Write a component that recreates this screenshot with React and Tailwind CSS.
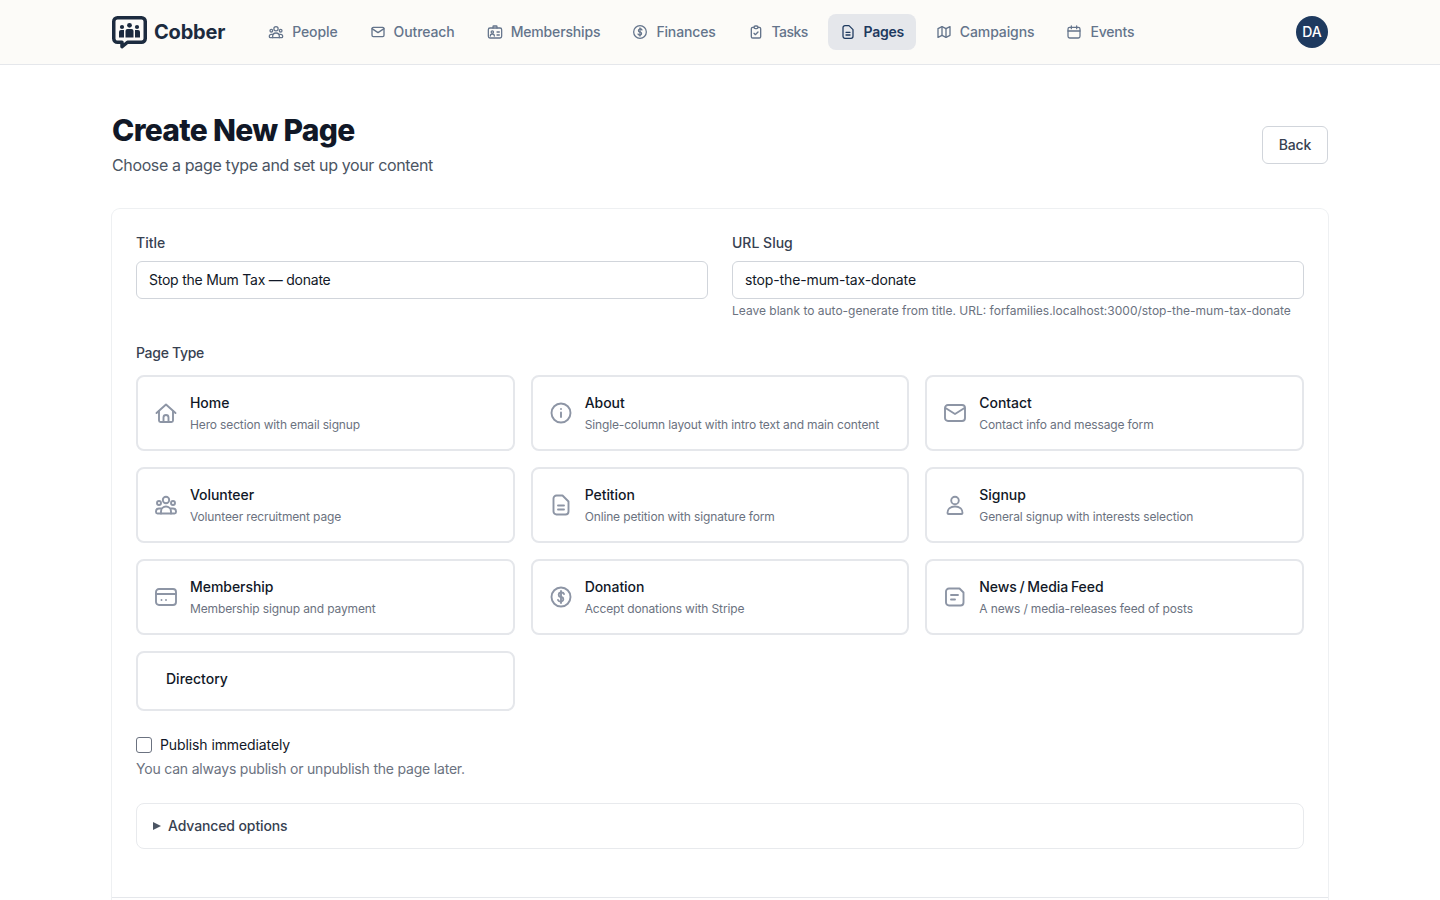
import { TbMail, TbClipboardCheck, TbMap } from 'react-icons/tb';

// icons drawn by hand where the packages don't have a close match
function Svg({ className, children }) {
  return (
    <svg viewBox="0 0 24 24" fill="none" stroke="currentColor" strokeWidth="1.9" strokeLinecap="round" strokeLinejoin="round" className={className}>
      {children}
    </svg>
  );
}

const PeopleIcon = ({ className }) => (
  <Svg className={className}>
    <circle cx="12" cy="7" r="3.2" />
    <circle cx="5" cy="10" r="2" />
    <circle cx="19" cy="10" r="2" />
    <path d="M7 20.5v-2a5 5 0 0 1 10 0v2" />
    <path d="M7 15.5H5a3 3 0 0 0-3 3v.5a1.5 1.5 0 0 0 1.500 1.500h17A1.500 1.500 0 0 0 22 19v-.5a3 3 0 0 0-3-3h-2" />
  </Svg>
);

const BadgeIcon = ({ className }) => (
  <Svg className={className}>
    <rect x="2" y="6" width="20" height="15" rx="2.500" />
    <path d="M9 6V4a1 1 0 0 1 1-1h4a1 1 0 0 1 1 1v2" />
    <circle cx="8" cy="12" r="1.800" />
    <path d="M5 18a3 3 0 0 1 6 0" />
    <path d="M15 12h3.500M15 16.500h3.500" />
  </Svg>
);

const DollarIcon = ({ className }) => (
  <Svg className={className}>
    <circle cx="12" cy="12" r="9.500" />
    <path d="M15 9a2.500 2 0 0 0-2.500-1.500h-1a2.300 2.300 0 0 0 0 4.500h1a2.300 2.300 0 0 1 0 4.500h-1A2.500 2 0 0 1 9 15" />
    <path d="M12 6v12" />
  </Svg>
);

const DocIcon = ({ className }) => (
  <Svg className={className}>
    <path d="M7.500 2.500h6l6 6v10a3 3 0 0 1-3 3h-9a3 3 0 0 1-3-3v-13a3 3 0 0 1 3-3z" />
    <path d="M9 12.500h6M9 16.500h6" />
  </Svg>
);

const CalendarIcon = ({ className }) => (
  <Svg className={className}>
    <rect x="3" y="5" width="18" height="16" rx="2.500" />
    <path d="M8 3v4M16 3v4M3 10.500h18" />
  </Svg>
);

const HomeIcon = ({ className }) => (
  <Svg className={className}>
    <path d="M2.500 12 12 3.500 21.500 12" />
    <path d="M5 10v9.500a1.500 1.500 0 0 0 1.500 1.500h11a1.500 1.500 0 0 0 1.500-1.500V10" />
    <path d="M9.500 21v-4.500a2.500 2.500 0 0 1 5 0V21" />
  </Svg>
);

const InfoIcon = ({ className }) => (
  <Svg className={className}>
    <circle cx="12" cy="12" r="9.500" />
    <path d="M12 8h.01M12 11.500V16" />
  </Svg>
);

const MailIcon = ({ className }) => (
  <Svg className={className}>
    <rect x="2" y="4" width="20" height="16" rx="3" />
    <path d="M2.500 7 12 13l9.500-6" />
  </Svg>
);

const UserIcon = ({ className }) => (
  <Svg className={className}>
    <circle cx="12" cy="7.500" r="3.800" />
    <path d="M4.500 20c0-4 3-6.500 7.500-6.500s7.500 2.500 7.500 6.500a1 1 0 0 1-1 1h-13a1 1 0 0 1-1-1z" />
  </Svg>
);

const CardIcon = ({ className }) => (
  <Svg className={className}>
    <rect x="2" y="4" width="20" height="16" rx="3" />
    <path d="M2 9h20M7.500 15h.01M12 15h.01" />
  </Svg>
);

const NewsIcon = ({ className }) => (
  <Svg className={className}>
    <path d="M6 3.500h10.500l4 4v10a3 3 0 0 1-3 3H6a3 3 0 0 1-3-3v-11a3 3 0 0 1 3-3z" />
    <path d="M8 10h7M8 14.500h4" />
  </Svg>
);

const navItems = [
  { label: 'People', icon: PeopleIcon, track: 'tracking-[-0.1px]' },
  { label: 'Outreach', icon: TbMail, track: 'tracking-[-0.1px]' },
  { label: 'Memberships', icon: BadgeIcon, track: 'tracking-[-0.15px]' },
  { label: 'Finances', icon: DollarIcon, track: 'tracking-[-0.15px]' },
  { label: 'Tasks', icon: TbClipboardCheck, track: 'tracking-[-0.6px]' },
  { label: 'Pages', icon: DocIcon, active: true, track: 'tracking-[-0.3px]' },
  { label: 'Campaigns', icon: TbMap, track: 'tracking-[-0.1px]' },
  { label: 'Events', icon: CalendarIcon, track: 'tracking-[-0.2px]' },
];

const pageTypes = [
  { title: 'Home', desc: 'Hero section with email signup', icon: HomeIcon },
  { title: 'About', desc: 'Single-column layout with intro text and main content', icon: InfoIcon },
  { title: 'Contact', desc: 'Contact info and message form', icon: MailIcon },
  { title: 'Volunteer', desc: 'Volunteer recruitment page', icon: PeopleIcon },
  { title: 'Petition', desc: 'Online petition with signature form', icon: DocIcon },
  { title: 'Signup', desc: 'General signup with interests selection', icon: UserIcon },
  { title: 'Membership', desc: 'Membership signup and payment', icon: CardIcon },
  { title: 'Donation', desc: 'Accept donations with Stripe', icon: DollarIcon },
  { title: 'News / Media Feed', desc: 'A news / media-releases feed of posts', icon: NewsIcon },
];

function Logo() {
  return (
    <svg width="35" height="33" viewBox="0 0 35 33" fill="none">
      <path d="M5.500 1.750h24a3.750 3.750 0 0 1 3.750 3.750v17a3.750 3.750 0 0 1-3.750 3.750H15.500l-5.500 4.500v-4.500H5.500a3.750 3.750 0 0 1-3.750-3.750v-17A3.750 3.750 0 0 1 5.500 1.750z" stroke="#1c2b3f" strokeWidth="3.500" strokeLinejoin="round" />
      <circle cx="17.500" cy="9.300" r="2.400" fill="#1c2b3f" />
      <circle cx="10" cy="11" r="2.100" fill="#1c2b3f" />
      <circle cx="25" cy="11" r="2.100" fill="#1c2b3f" />
      <path d="M13.500 21.500V15a2 2 0 0 1 2-2h4a2 2 0 0 1 2 2v6.500z" fill="#1c2b3f" />
      <path d="M7 21.500V16a2 2 0 0 1 2-2h3v7.500z" fill="#1c2b3f" />
      <path d="M23 21.500V14h3a2 2 0 0 1 2 2v5.500z" fill="#1c2b3f" />
    </svg>
  );
}

function PageTypeCard({ title, desc, icon: Icon }) {
  return (
    <div className="h-[76px] flex items-center gap-3 rounded-lg border-2 border-[#e5e7eb] bg-white px-4">
      <Icon className="w-6 h-6 text-[#8d95a5] shrink-0" />
      <div>
        <div className="text-sm font-medium leading-5 text-[#111827] tracking-[-0.05px] [word-spacing:-1px]">{title}</div>
        <div className="mt-[4px] text-xs leading-4 text-[#6b7280] tracking-[-0.14px]">{desc}</div>
      </div>
    </div>
  );
}

export default function App() {
  return (
    <div className="min-h-screen bg-white font-['Inter',sans-serif]">
      {/* Navbar */}
      <header className="h-[65px] bg-[#fcfbf8] border-b border-[#e5e7eb]">
        <div className="mx-auto w-[1216px] h-16 flex items-center">
          <div className="flex items-center gap-[7px] mr-[31px]">
            <Logo />
            <span className="text-xl font-bold text-[#1c2b3f] tracking-[-0.2px]">Cobber</span>
          </div>
          <nav className="flex items-center gap-2">
            {navItems.map(({ label, icon: Icon, active, track }) => (
              <div key={label} className={active ? 'flex items-center gap-2 h-9 px-3 rounded-lg bg-[#e5e7eb] text-[#1e3a5f] text-sm font-semibold' : 'flex items-center gap-2 h-9 px-3 rounded-lg text-[#64748b] text-sm font-medium'}>
                <Icon className="w-4 h-4" />
                <span className={track}>{label}</span>
              </div>
            ))}
          </nav>
          <div className="ml-auto w-8 h-8 rounded-full bg-[#1e3a5f] text-white text-sm font-medium flex items-center justify-center">DA</div>
        </div>
      </header>

      <main className="mx-auto w-[1216px]">
        <div className="pt-[45px] flex items-center justify-between">
          <div>
            <h1 className="text-3xl font-extrabold leading-10 tracking-[-0.68px] text-[#111827]">Create New Page</h1>
            <p className="text-base text-[#4b5563] mt-[3px] tracking-[-0.37px]">Choose a page type and set up your content</p>
          </div>
          <button className="mt-[3px] h-[38px] w-[66px] rounded-md border border-[#d1d5db] bg-white text-sm font-medium text-[#374151] tracking-[-0.2px]">Back</button>
        </div>

        <div className="mt-8 rounded-lg ring-1 ring-[#eef0f2] bg-white">
          <div className="p-6 pb-12">
            <div className="grid grid-cols-2 gap-6">
              <div>
                <label className="block text-sm font-medium text-[#374151] leading-5">Title</label>
                <input readOnly value="Stop the Mum Tax — donate" className="mt-2 block w-full h-[38px] px-3 pb-[2px] rounded-md border border-[#d1d5db] text-sm text-[#111827] tracking-[-0.24px] outline-none" />
              </div>
              <div>
                <label className="block text-sm font-medium text-[#374151] leading-5">URL Slug</label>
                <input readOnly value="stop-the-mum-tax-donate" className="mt-2 block w-full h-[38px] px-3 pb-[2px] rounded-md border border-[#d1d5db] text-sm text-[#111827] tracking-[-0.13px] outline-none" />
                <p className="mt-1 text-xs leading-4 text-[#6b7280]">Leave blank to auto-generate from title. URL: forfamilies.localhost:3000/stop-the-mum-tax-donate</p>
              </div>
            </div>

            <div className="mt-[24px] text-sm font-medium text-[#374151] leading-5 tracking-[-0.3px]">Page Type</div>
            <div className="mt-3 grid grid-cols-3 gap-4">
              {pageTypes.map((t) => <PageTypeCard key={t.title} {...t} />)}
              <div className="h-[60px] flex items-center rounded-lg border-2 border-[#e5e7eb] bg-white px-7 pb-1 text-sm font-medium text-[#111827]">Directory</div>
            </div>

            <div className="mt-6 flex items-center gap-2">
              <input type="checkbox" readOnly className="w-4 h-4 appearance-none rounded-[3px] border border-[#6b7280] bg-white" />
              <span className="text-sm text-[#111827] leading-5 tracking-[-0.1px]">Publish immediately</span>
            </div>
            <p className="mt-1 text-sm leading-5 text-[#6b7280] tracking-[-0.2px]">You can always publish or unpublish the page later.</p>

            <div className="mt-6 h-[46px] flex items-center gap-[7px] px-4 rounded-lg border border-[#e8eaed] text-sm font-medium text-[#374151]">
              <span className="w-0 h-0 border-y-[4.5px] border-y-transparent border-l-[8px] border-l-[#4b5563]" />
              <span className="tracking-[-0.12px]">Advanced options</span>
            </div>
          </div>
          <div className="border-t border-[#e5e7eb] h-12 bg-white" />
        </div>
      </main>
    </div>
  );
}
